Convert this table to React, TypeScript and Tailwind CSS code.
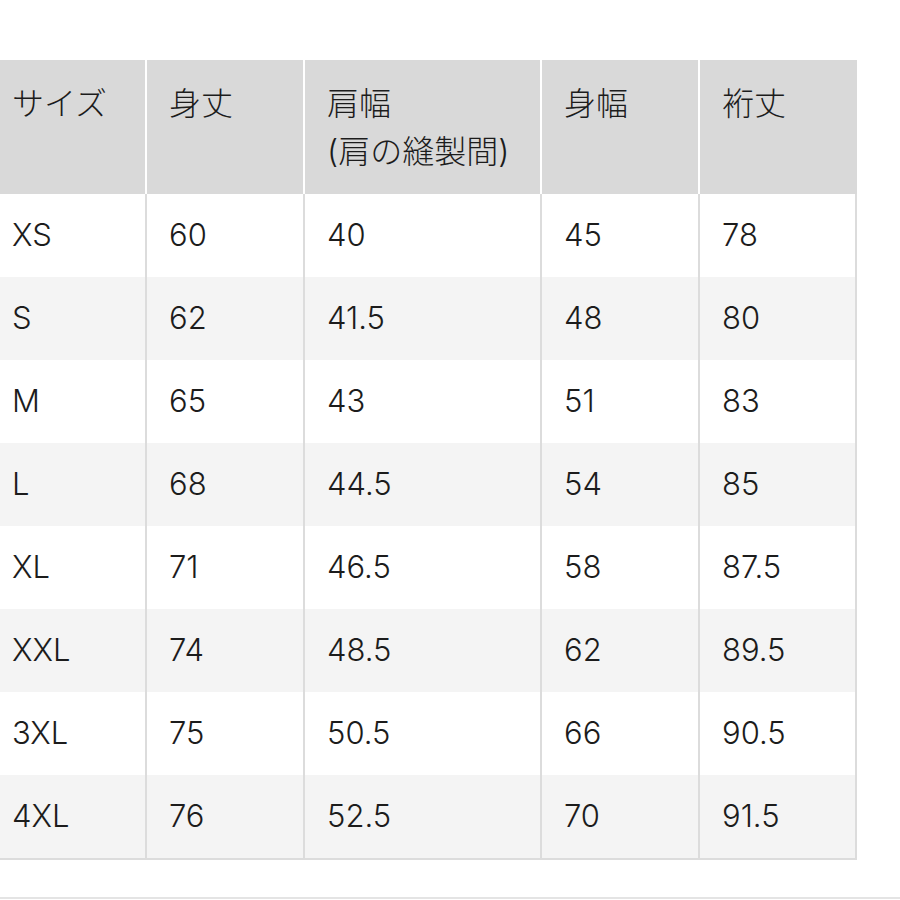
import React from "react";

const rows: string[][] = [
  ["XS", "60", "40", "45", "78"],
  ["S", "62", "41.5", "48", "80"],
  ["M", "65", "43", "51", "83"],
  ["L", "68", "44.5", "54", "85"],
  ["XL", "71", "46.5", "58", "87.5"],
  ["XXL", "74", "48.5", "62", "89.5"],
  ["3XL", "75", "50.5", "66", "90.5"],
  ["4XL", "76", "52.5", "70", "91.5"],
];

const widths = ["w-[145px]", "w-[158px]", "w-[237px]", "w-[158px]", "w-[159px]"];

export default function App() {
  return (
    <div
      className="relative w-[900px] h-[900px] bg-white text-[#1c1c1c] overflow-hidden font-light"
      style={{ fontFamily: 'Inter, "Noto Sans CJK JP", sans-serif' }}
    >
      <div className="pt-[60px]">
        <div className="w-[857px]">
          {/* header */}
          <div className="flex h-[134px]">
            <div className={`${widths[0]} bg-[#d9d9d9] pl-[12px] pt-[20px] text-[32px] leading-[48px]`}>サイズ</div>
            <div className={`${widths[1]} bg-[#d9d9d9] border-l-2 border-white pl-[22px] pt-[20px] text-[32px] leading-[48px]`}>身丈</div>
            <div className={`${widths[2]} bg-[#d9d9d9] border-l-2 border-white pl-[22px] pt-[20px] text-[32px] leading-[48px]`}>
              <div>肩幅</div>
              <div>(肩の縫製間)</div>
            </div>
            <div className={`${widths[3]} bg-[#d9d9d9] border-l-2 border-white pl-[22px] pt-[20px] text-[32px] leading-[48px]`}>身幅</div>
            <div className={`${widths[4]} bg-[#d9d9d9] border-l-2 border-white pl-[22px] pt-[20px] text-[32px] leading-[48px]`}>裄丈</div>
          </div>
          {/* body */}
          <div className="border-b-2 border-[#dcdcdc]">
            {rows.map((r, i) => (
              <div key={i} className={`flex h-[83px] ${i % 2 === 1 ? "bg-[#f4f4f4]" : "bg-white"}`}>
                {r.map((c, j) => (
                  <div
                    key={j}
                    className={`${widths[j]} flex items-center text-[31px] ${
                      j === 0 ? "pl-[12px]" : "pl-[22px] border-l-2 border-[#dcdcdc]"
                    } ${j === 4 ? "border-r-2 border-r-[#dcdcdc]" : ""}`}
                  >
                    {c}
                  </div>
                ))}
              </div>
            ))}
          </div>
        </div>
      </div>
      <div className="absolute left-0 right-0 top-[897px] h-[2px] bg-[#e4e4e4]" />
    </div>
  );
}
